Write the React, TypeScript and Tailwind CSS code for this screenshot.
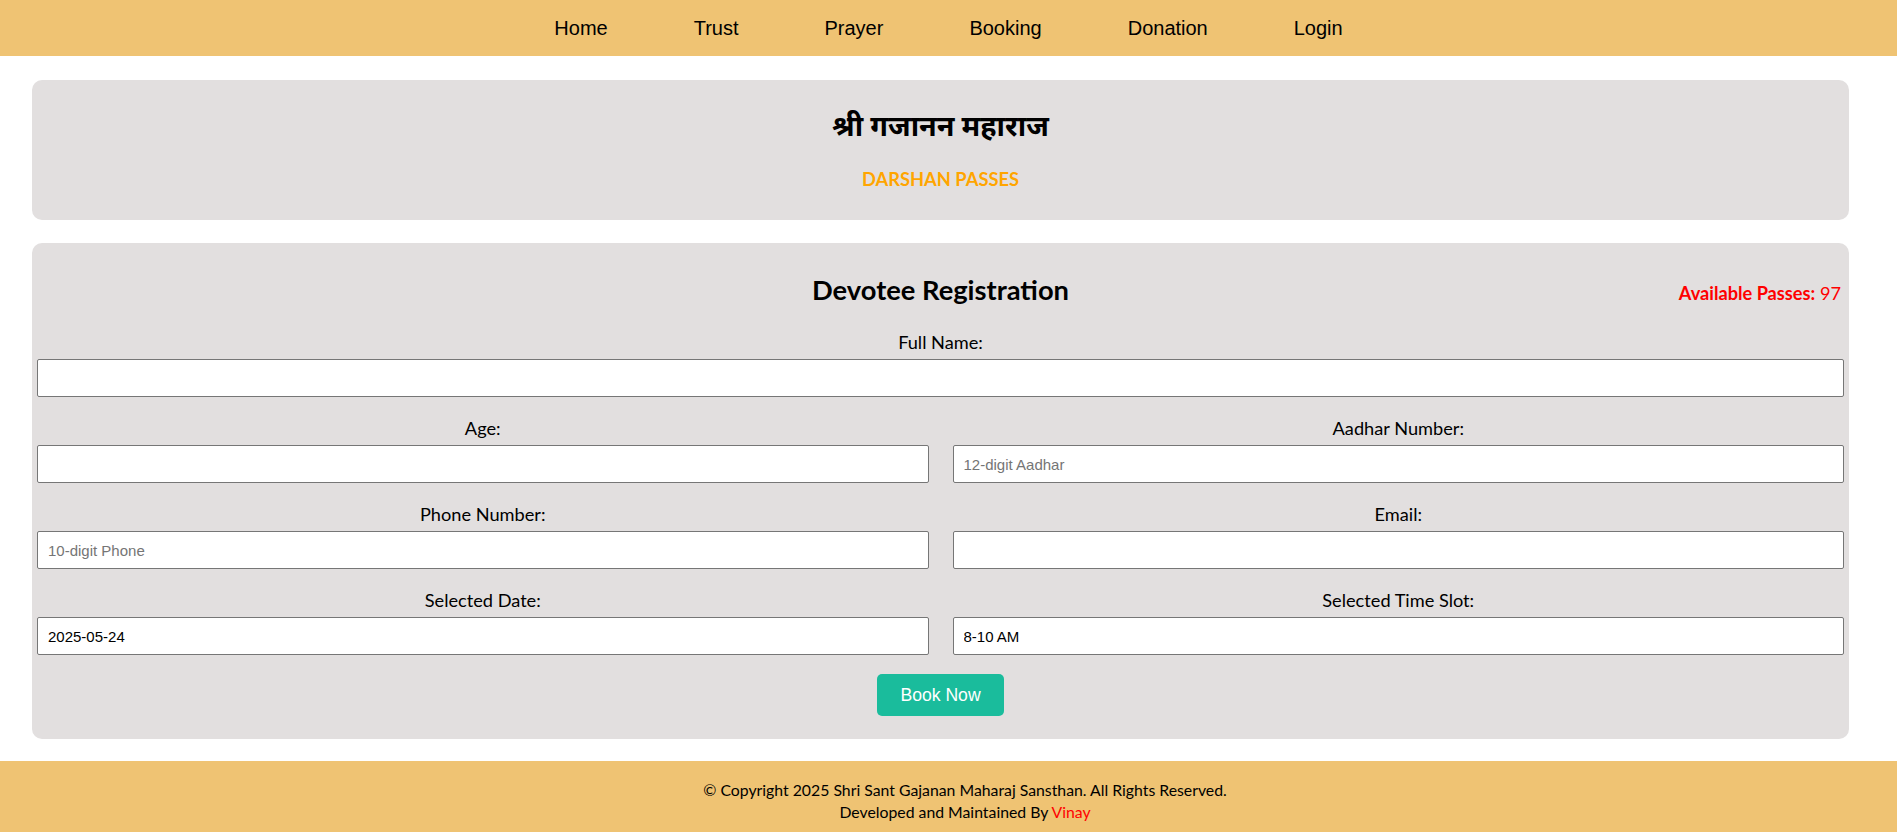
import React from 'react';

const navLinks = ['Home', 'Trust', 'Prayer', 'Booking', 'Donation', 'Login'];

function Field({ label, placeholder, value }: { label: string; placeholder?: string; value?: string }) {
  return (
    <div className="flex flex-col">
      <label className="text-center text-[18.2px] leading-[24px] text-black mb-[5px]">{label}</label>
      <input
        type="text"
        placeholder={placeholder}
        defaultValue={value}
        className="h-[38px] w-full bg-white border border-[#767676] rounded-[2px] px-[10px] text-[15px] text-black placeholder:text-[#757575] outline-none"
        style={{ fontFamily: '"Liberation Sans", Arial, sans-serif' }}
      />
    </div>
  );
}

export default function App() {
  return (
    <div className="min-h-[832px] bg-white flex flex-col font-['Lato','Noto_Sans',sans-serif]">
      <nav className="h-[56px] bg-[#efc373] flex items-center justify-center">
        <ul className="flex gap-[86px] font-['Liberation_Sans',Arial,sans-serif] text-[20px] text-black">
          {navLinks.map((link) => (
            <li key={link}>
              <a href="#">{link}</a>
            </li>
          ))}
        </ul>
      </nav>

      <main className="pl-[32px] pr-[48px] pt-[24px] pb-[22px] flex flex-col gap-[23px]">
        <section className="bg-[#e2dfdf] rounded-[10px] pt-[27px] pb-[29px] flex flex-col items-center gap-[24px]">
          <h1 className="text-[28.8px] leading-[36px] font-bold text-black">श्री गजानन महाराज</h1>
          <p className="text-[18.3px] leading-[24px] font-bold text-[#ffa500]">DARSHAN PASSES</p>
        </section>

        <section className="bg-[#e2dfdf] rounded-[10px] px-[5px] pt-[29px] pb-[23px] flex flex-col">
          <div className="grid grid-cols-[1fr_auto_1fr] items-center h-[36px] mb-[22px]">
            <div />
            <h2 className="text-[27.3px] leading-[36px] font-bold text-black">Devotee Registration</h2>
            <div className="text-right pr-[3px] pt-[8px] text-[18.2px] text-[#ff0000]">
              <span className="font-bold">Available Passes:</span> 97
            </div>
          </div>

          <div className="flex flex-col gap-[19px]">
            <Field label="Full Name:" />
            <div className="grid grid-cols-2 gap-x-[24px]">
              <Field label="Age:" />
              <Field label="Aadhar Number:" placeholder="12-digit Aadhar" />
            </div>
            <div className="grid grid-cols-2 gap-x-[24px]">
              <Field label="Phone Number:" placeholder="10-digit Phone" />
              <Field label="Email:" />
            </div>
            <div className="grid grid-cols-2 gap-x-[24px]">
              <Field label="Selected Date:" value="2025-05-24" />
              <Field label="Selected Time Slot:" value="8-10 AM" />
            </div>
            <div className="flex justify-center">
              <button className="h-[42px] w-[127px] rounded-[5px] bg-[#1abc9c] text-white text-[17.6px] font-['Liberation_Sans',Arial,sans-serif]">
                Book Now
              </button>
            </div>
          </div>
        </section>
      </main>

      <footer className="bg-[#efc373] pl-[33px] pt-[18px] pb-[11px] text-center text-[15.8px] leading-[21.6px] text-black">
        <p>© Copyright 2025 Shri Sant Gajanan Maharaj Sansthan. All Rights Reserved.</p>
        <p>
          Developed and Maintained By <span className="text-[#ff0000]">Vinay</span>
        </p>
      </footer>
    </div>
  );
}
